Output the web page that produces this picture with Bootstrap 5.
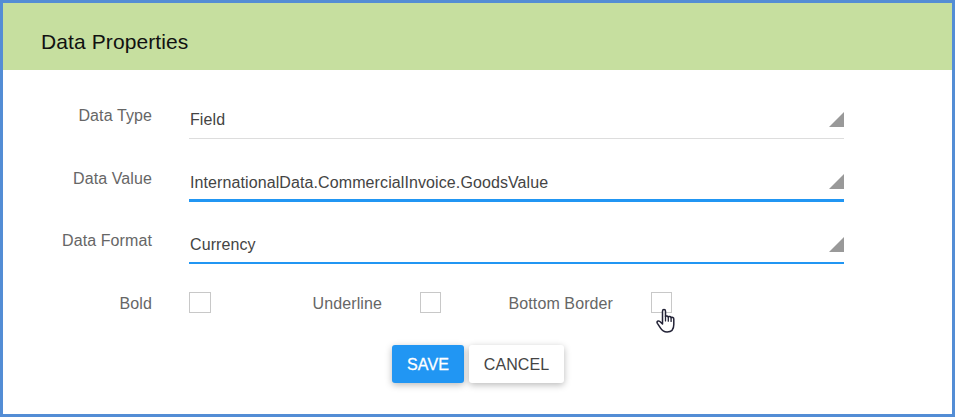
<!DOCTYPE html>
<html lang="en">
<head>
<meta charset="utf-8">
<meta name="viewport" content="width=device-width, initial-scale=1">
<title>Data Properties</title>
<link href="https://cdn.jsdelivr.net/npm/bootstrap@5.3.0/dist/css/bootstrap.min.css" rel="stylesheet">
<style>
body { font-family: "Liberation Sans", Arial, sans-serif; font-size: 16px; line-height: 20px; color: #444; letter-spacing: .1px; }
.dialog-frame { height: 417px; border: 3px solid #538dd5; }
.dialog-head { height: 67px; padding: 10px 0 0 38px; background: #c6df9f; }
.dialog-title { font-size: 21px; line-height: 24px; color: #111; }
.dialog-form { padding-top: 27px; }
.field-line { height: 42px; margin-bottom: 21px; }
.field-line-last { margin-top: -1px; }
.field-name { width: 149px; margin-right: 37px; padding-top: 9px; text-align: right; color: #666; }
.field-select { width: 655px; padding: 13px 0 0 1px; border-bottom: 1px solid #ddd; }
.field-select svg { margin-top: 2px; }
.field-select.is-focus { border-bottom: 3px solid #2196f3; }
.field-select.is-focus svg { margin-top: 1px; }
.field-select.is-set { border-bottom: 2px solid #2196f3; }
.check-line { height: 21px; margin-top: 28px; color: #666; }
.check-line label { line-height: 23px; text-align: right; }
.w-bold { width: 149px; margin-right: 37px; }
.w-under { width: 168px; margin: 0 38px 0 3px; }
.w-bottom { width: 172px; margin-right: 38px; }
.tick { appearance: none; width: 21px; height: 21px; margin: 0; border: 1px solid #c8c8c8; border-radius: 0; background: #fff; }
.first-tick { width: 22px; }
.action-line { gap: 5px; margin: 32px 0 0 389px; }
.action { height: 38px; padding: 1px 0 0; border: 0; border-radius: 3px; font-size: 16px; line-height: 37px; letter-spacing: .1px; box-shadow: 0 2px 7px rgba(0,0,0,.28); }
.action-save { width: 72px; background: #2196f3; color: #fff; -webkit-text-stroke: .3px #fff; }
.action-cancel { width: 95px; background: #fff; color: #444; }
.pointer { left: 5px; top: 16px; }
</style>
</head>
<body class="overflow-hidden">
<main class="dialog-frame bg-white">
  <header class="dialog-head d-flex align-items-center"><h1 class="dialog-title fw-normal m-0">Data Properties</h1></header>
  <form class="dialog-form">
    <div class="field-line d-flex">
      <label class="field-name">Data Type</label>
      <div class="field-select d-flex justify-content-between"><span>Field</span><svg width="15" height="15"><path d="M15 0V15H0Z" fill="#999"/></svg></div>
    </div>
    <div class="field-line d-flex">
      <label class="field-name">Data Value</label>
      <div class="field-select is-focus d-flex justify-content-between"><span>InternationalData.CommercialInvoice.GoodsValue</span><svg width="15" height="15"><path d="M15 0V15H0Z" fill="#999"/></svg></div>
    </div>
    <div class="field-line field-line-last d-flex mb-0">
      <label class="field-name">Data Format</label>
      <div class="field-select is-set d-flex justify-content-between"><span>Currency</span><svg width="15" height="15"><path d="M15 0V15H0Z" fill="#999"/></svg></div>
    </div>
    <div class="check-line d-flex">
      <label class="w-bold" for="bold">Bold</label><input class="tick first-tick" type="checkbox" id="bold">
      <label class="w-under" for="underline">Underline</label><input class="tick" type="checkbox" id="underline">
      <label class="w-bottom" for="bottom">Bottom Border</label>
      <span class="position-relative d-flex"><input class="tick" type="checkbox" id="bottom">
        <svg class="pointer position-absolute" width="20" height="26" viewBox="0 0 20 26"><path d="M6.500 15V3.200c0-2.200 3-2.200 3 0v5.300c.6-.9 2.500-.7 2.800.5.700-.9 2.600-.5 2.800.7.900-.7 2.700-.2 2.700 1.300v5.500c0 4.600-2.400 7.500-6.700 7.500-3.700 0-5.300-1.600-6.900-4.300L1.400 15.300c-1.100-1.900.8-3.100 2.500-1.800L6.500 16Z" fill="#fff" stroke="#222236" stroke-width="1.500" stroke-linejoin="round"/><path d="M9.500 8.200v4.700M12.300 9v4.200M15.100 9.700v3.700" fill="none" stroke="#222236" stroke-width="1.300" stroke-linecap="round"/></svg>
      </span>
    </div>
    <div class="action-line d-flex">
      <button type="button" class="btn action action-save">SAVE</button>
      <button type="button" class="btn action action-cancel">CANCEL</button>
    </div>
  </form>
</main>
<script src="https://cdn.jsdelivr.net/npm/bootstrap@5.3.0/dist/js/bootstrap.bundle.min.js"></script>
</body>
</html>
